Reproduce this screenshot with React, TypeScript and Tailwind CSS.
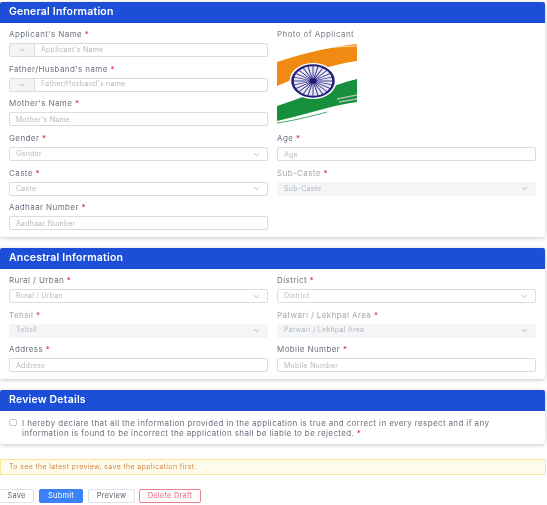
import { ChevronDown } from "lucide-react";

const Label = ({ text, faded }: { text: string; faded?: boolean }) => (
  <div className={`h-[11px] mb-[3px] text-[8px] leading-[11px] tracking-[0.4px] ${faded ? "text-[#a3a8af]" : "text-[#6b7280]"}`}>
    {text} <span className="text-[#e11d48]">*</span>
  </div>
);

const TextField = ({ label, hint }: { label: string; hint: string }) => (
  <div className="h-[34.7px]">
    <Label text={label} />
    <input
      readOnly
      placeholder={hint}
      className="block w-full h-[14px] px-[6px] bg-white border border-[#d9dce1] rounded-[2px] text-[7px] tracking-[0.25px] placeholder:text-[#b4b8be] outline-none"
    />
  </div>
);

const PrefixField = ({ label, hint }: { label: string; hint: string }) => (
  <div className="h-[34.7px]">
    <Label text={label} />
    <div className="flex h-[14px] bg-white border border-[#d9dce1] rounded-[2px]">
      <div className="w-[25px] flex items-center justify-center bg-[#f3f4f6] border-r border-[#d9dce1]">
        <ChevronDown className="w-[8px] h-[8px] text-[#9ca3af]" />
      </div>
      <input
        readOnly
        placeholder={hint}
        className="flex-1 min-w-0 px-[6px] text-[7px] tracking-[0.25px] placeholder:text-[#b4b8be] outline-none"
      />
    </div>
  </div>
);

const SelectField = ({ label, hint, disabled }: { label: string; hint: string; disabled?: boolean }) => (
  <div className="h-[34.7px]">
    <Label text={label} faded={disabled} />
    <div
      className={`flex items-center justify-between h-[14px] px-[6px] rounded-[2px] border text-[7px] tracking-[0.25px] text-[#b4b8be] ${
        disabled ? "bg-[#f3f5f6] border-[#f3f5f6]" : "bg-white border-[#d9dce1]"
      }`}
    >
      <span>{hint}</span>
      <ChevronDown className="w-[9px] h-[9px] text-[#a3a8af]" />
    </div>
  </div>
);

const Flag = () => {
  const spokes = Array.from({ length: 24 }, (_, i) => (i * 360) / 24);
  return (
    <svg viewBox="0 0 80 82" className="w-[80px] h-[82px] block">
      <path d="M0 19 C25 11 55 3 80 1 L80 18 C55 21 25 32 0 43 Z" fill="#f08a12" />
      <path d="M12 13 C35 6 60 3 80 3" stroke="#fff" strokeWidth="0.8" fill="none" />
      <path d="M0 63 C25 55 55 42 80 36 L80 59 C55 62 25 73 0 78 Z" fill="#16903c" />
      <path d="M0 80 C20 77 35 73 50 69" stroke="#16903c" strokeWidth="0.8" fill="none" />
      <path d="M60 56 L80 52 M62 59 L80 56" stroke="#a9bdb0" strokeWidth="1.4" fill="none" />
      <g transform="translate(36 38) scale(1 0.77)">
        <circle r="23.5" fill="#fff" />
        <circle r="20.5" fill="#e8e6f2" stroke="#23207a" strokeWidth="2.6" />
        {spokes.map((a) => (
          <line key={a} x1="0" y1="0" x2="0" y2="-20" stroke="#2f2b8c" strokeWidth="1" transform={`rotate(${a})`} />
        ))}
        <circle r="3.5" fill="#1e1b6e" />
      </g>
    </svg>
  );
};

const SectionTitle = ({ title }: { title: string }) => (
  <div className="h-[20.5px] px-[9px] flex items-center bg-[#1d4ed8] text-white text-[10.5px] font-semibold tracking-[0.2px] rounded-t-[2px]">
    {title}
  </div>
);

export default function App() {
  return (
    <div className="w-[547px] h-[505px] overflow-hidden bg-white pt-[2px] font-['Inter',sans-serif] blur-[0.35px]">
      <div className="w-[545px] h-[235px] bg-white rounded-[2px] shadow-[0_1px_4px_rgba(0,0,0,0.22)]">
        <SectionTitle title="General Information" />
        <div className="grid grid-cols-2 gap-x-[9px] px-[9px] pt-[6.5px]">
          <div>
            <PrefixField label="Applicant's Name" hint="Applicant's Name" />
            <PrefixField label="Father/Husband's name" hint="Father/Husband's name" />
            <TextField label="Mother's Name" hint="Mother's Name" />
            <SelectField label="Gender" hint="Gender" />
            <SelectField label="Caste" hint="Caste" />
            <TextField label="Aadhaar Number" hint="Aadhaar Number" />
          </div>
          <div>
            <div className="h-[104.1px]">
              <div className="h-[11px] mb-[3px] text-[8px] leading-[11px] tracking-[0.4px] text-[#7b818a]">Photo of Applicant</div>
              <Flag />
            </div>
            <TextField label="Age" hint="Age" />
            <SelectField label="Sub-Caste" hint="Sub-Caste" disabled />
          </div>
        </div>
      </div>

      <div className="w-[545px] h-[131px] mt-[11px] bg-white rounded-[2px] shadow-[0_1px_4px_rgba(0,0,0,0.22)]">
        <SectionTitle title="Ancestral Information" />
        <div className="grid grid-cols-2 gap-x-[9px] px-[9px] pt-[6.5px]">
          <SelectField label="Rural / Urban" hint="Rural / Urban" />
          <SelectField label="District" hint="District" />
          <SelectField label="Tehsil" hint="Tehsil" disabled />
          <SelectField label="Patwari / Lekhpal Area" hint="Patwari / Lekhpal Area" disabled />
          <TextField label="Address" hint="Address" />
          <TextField label="Mobile Number" hint="Mobile Number" />
        </div>
      </div>

      <div className="w-[545px] h-[54px] mt-[11px] bg-white rounded-[2px] shadow-[0_1px_4px_rgba(0,0,0,0.22)]">
        <SectionTitle title="Review Details" />
        <div className="flex gap-[5px] px-[9px] pt-[7px]">
          <div className="w-[8px] h-[7px] mt-[1px] shrink-0 bg-white border border-[#c5c9cf] rounded-[2px]" />
          <p className="text-[8px] leading-[10px] tracking-[0.37px] whitespace-nowrap text-[#6b7280]">
            I hereby declare that all the information provided in the application is true and correct in every respect and if any
            <br />
            information is found to be incorrect the application shall be liable to be rejected. <span className="text-[#e11d48]">*</span>
          </p>
        </div>
      </div>

      <div className="w-[546px] h-[16px] mt-[15px] px-[8px] flex items-center bg-[#fffbeb] border border-[#fde39a] text-[7px] tracking-[0.35px] text-[#d08a50]">
        To see the latest preview, save the application first.
      </div>

      <div className="flex gap-[4px] mt-[14px] text-[7.5px] tracking-[0.2px]">
        <button className="w-[35px] h-[14px] -ml-[1px] mr-[1px] bg-white border border-[#dfe1e5] rounded-[2px] text-[#5f6670]">Save</button>
        <button className="w-[44px] h-[14px] bg-[#3b82f6] rounded-[2px] text-white">Submit</button>
        <button className="w-[47px] h-[14px] ml-[1px] bg-white border border-[#dfe1e5] rounded-[2px] text-[#5f6670]">Preview</button>
        <button className="w-[62px] h-[14px] bg-white border border-[#ef7f8e] rounded-[2px] text-[#e8707f]">Delete Draft</button>
      </div>
    </div>
  );
}
